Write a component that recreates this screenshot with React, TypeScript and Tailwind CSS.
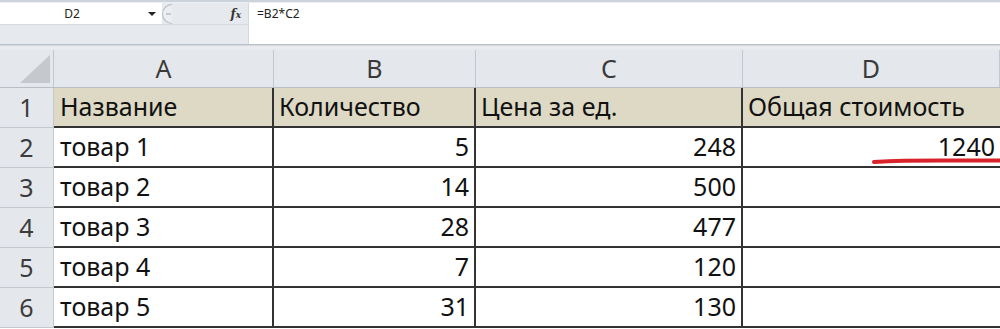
import React from "react";

const COLS = ["A", "B", "C", "D"];
const WIDTHS = ["w-[220px]", "w-[202px]", "w-[267px]", "w-[257px]"];

interface Row {
  name: string;
  qty: string;
  price: string;
  total: string;
}

const ROWS: Row[] = [
  { name: "товар 1", qty: "5", price: "248", total: "1240" },
  { name: "товар 2", qty: "14", price: "500", total: "" },
  { name: "товар 3", qty: "28", price: "477", total: "" },
  { name: "товар 4", qty: "7", price: "120", total: "" },
  { name: "товар 5", qty: "31", price: "130", total: "" },
];

function RowHead({ n }: { n: number }) {
  return (
    <div className="w-[54px] shrink-0 flex items-center justify-center bg-[#e4e7eb] border-r border-b border-[#c3c8ce] text-[#3c3c3c]">
      {n}
    </div>
  );
}

export default function App() {
  return (
    <div className="w-[1000px] h-[329px] overflow-hidden bg-white font-['Noto_Sans',sans-serif] text-[25px] text-[#111]">
      {/* Formula bar */}
      <div className="h-[2px] bg-[#cdd3db]" />
      <div className="h-[1px] bg-[#eceef1]" />
      <div className="flex h-[41px]">
        <div className="w-[248px] flex flex-col bg-[#e6e9ed]">
          <div className="flex h-[21px]">
            <div className="w-[162px] bg-white flex items-center text-[12px] text-[#222]">
              <span className="w-[144px] text-center">D2</span>
              <svg width="10" height="6" viewBox="0 0 10 6" className="ml-[3px]">
                <path d="M1 1 L9 1 L5 5 Z" fill="#222" />
              </svg>
            </div>
            <div className="flex-1 flex items-center">
              <div className="w-[10px] h-[20px] rounded-l-full border-l border-t border-b border-[#b4bac2] bg-[#eceef1] flex items-center justify-end pr-[1px]">
                <div className="w-[5px] h-[2px] bg-[#c5cad0]" />
              </div>
              <div className="flex-1" />
              <span className="font-['DejaVu_Serif',serif] italic font-bold text-[12px] text-[#333] mr-[7px] leading-none">
                f<span className="text-[9px]">x</span>
              </span>
            </div>
          </div>
          <div className="flex-1 border-t border-[#d9dde2]" />
        </div>
        <div className="flex-1 bg-white border-l border-[#d5d9de] pl-[8px] pt-[3px] text-[12px] text-[#222] leading-[16px]">
          =B2*C2
        </div>
      </div>
      <div className="h-[1px] bg-[#b9c1cb]" />
      <div className="h-[1px] bg-[#d3d8df]" />
      <div className="h-[4px] bg-[#e9ebee]" />

      {/* Column headers */}
      <div className="flex h-[38px] bg-[#e4e7eb] border-b border-[#b9bec5] text-[#3a3a3a]">
        <div className="w-[54px] shrink-0 border-r border-[#c3c8ce] relative">
          <svg width="31" height="29" viewBox="0 0 31 29" className="absolute left-[20px] top-[5px]">
            <path d="M30 0 L30 28 L0 28 Z" fill="#c5c9ce" />
          </svg>
        </div>
        {COLS.map((c, i) => (
          <div
            key={c}
            className={`${WIDTHS[i]} shrink-0 flex items-center justify-center border-r border-[#c3c8ce]`}
          >
            {c}
          </div>
        ))}
      </div>

      {/* Row 1 - titles */}
      <div className="flex h-[40px]">
        <RowHead n={1} />
        <div className="w-[220px] shrink-0 flex items-center px-[6px] bg-[#ddd9c4] border-r-2 border-b-2 border-[#333]">
          Название
        </div>
        <div className="w-[202px] shrink-0 flex items-center px-[5px] bg-[#ddd9c4] border-r-2 border-b-2 border-[#333]">
          Количество
        </div>
        <div className="w-[267px] shrink-0 flex items-center px-[5px] bg-[#ddd9c4] border-r-2 border-b-2 border-[#333]">
          Цена за ед.
        </div>
        <div className="w-[257px] shrink-0 flex items-center px-[5px] bg-[#ddd9c4] border-b-2 border-[#333] whitespace-nowrap">
          Общая стоимость
        </div>
      </div>

      {ROWS.map((r, i) => (
        <div key={r.name} className="flex h-[40px]">
          <RowHead n={i + 2} />
          <div className="w-[220px] shrink-0 flex items-center px-[6px] border-r-2 border-b-2 border-[#333]">
            {r.name}
          </div>
          <div className="w-[202px] shrink-0 flex items-center justify-end px-[5px] border-r-2 border-b-2 border-[#333]">
            {r.qty}
          </div>
          <div className="w-[267px] shrink-0 flex items-center justify-end px-[5px] border-r-2 border-b-2 border-[#333]">
            {r.price}
          </div>
          <div className="w-[257px] shrink-0 flex items-center justify-end px-[5px] border-b-2 border-[#333] relative">
            {r.total}
            {r.total && (
              <svg
                width="130"
                height="8"
                viewBox="0 0 130 8"
                className="absolute left-[128px] top-[29px]"
              >
                <path
                  d="M3 5 Q30 3.6 70 3.6 L130 3.4"
                  stroke="#d8232a"
                  strokeWidth="4"
                  strokeLinecap="round"
                  fill="none"
                />
              </svg>
            )}
          </div>
        </div>
      ))}
    </div>
  );
}
